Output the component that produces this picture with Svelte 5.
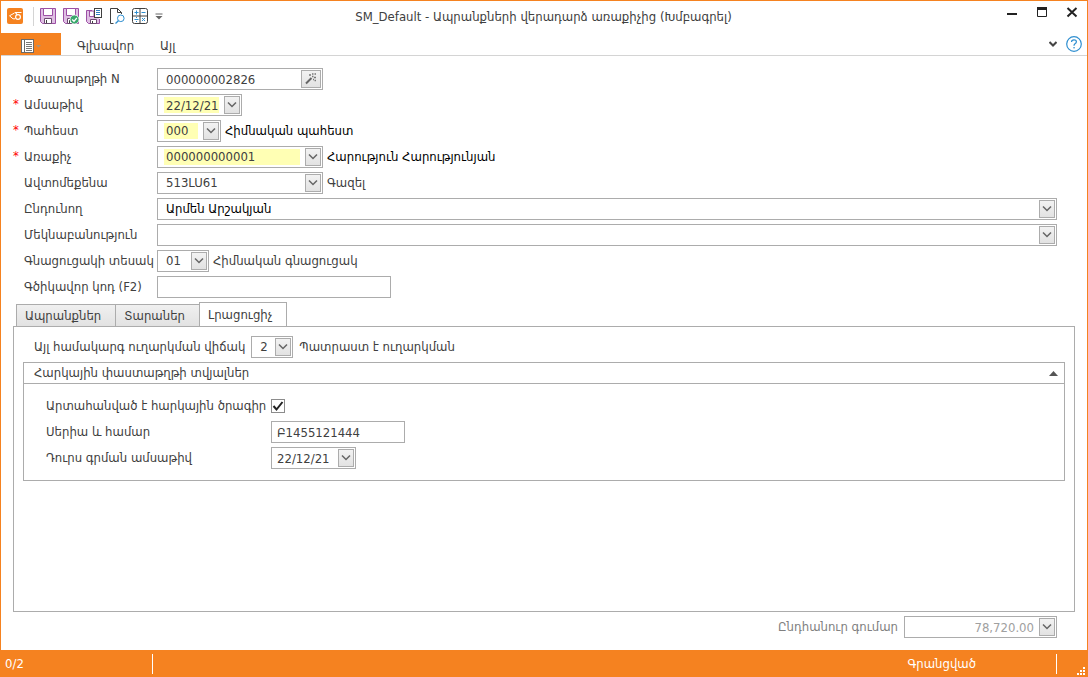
<script lang="ts">
  let docNumber = $state('000000002826');
  let docDate = $state('22/12/21');
  let barcode = $state('');
  let series = $state('Բ1455121444');
  let writeOffDate = $state('22/12/21');
  let total = $state('78,720.00');
  let exported = $state(true);
  let groupOpen = $state(true);
  let activeTab = $state(2);

  const tabs = ['Ապրանքներ', 'Տարաներ', 'Լրացուցիչ'];

  const lookups = [
    { id: 'store', label: 'Պահեստ', required: true, size: 'w-code', value: '000', note: 'Հիմնական պահեստ', strong: true },
    { id: 'supplier', label: 'Առաքիչ', required: true, size: 'w-long', value: '000000000001', note: 'Հարություն Հարությունյան', strong: true },
    { id: 'car', label: 'Ավտոմեքենա', required: false, size: 'w-long', value: '513LU61', note: 'Գազել', strong: false },
    { id: 'receiver', label: 'Ընդունող', required: false, size: 'w-full', value: 'Արմեն Արշակյան', note: '', strong: true },
    { id: 'comment', label: 'Մեկնաբանություն', required: false, size: 'w-full', value: '', note: '', strong: false },
    { id: 'price', label: 'Գնացուցակի տեսակ', required: false, size: 'w-short', value: '01', note: 'Հիմնական գնացուցակ', strong: false },
  ];
</script>

{#snippet chevron()}
  <svg width="10" height="8" viewBox="0 0 10 8" aria-hidden="true">
    <path d="M1 1.5 L5 5.5 L9 1.5" fill="none" stroke="#666" stroke-width="1.5" />
  </svg>
{/snippet}

{#snippet floppy()}
  <path d="M.5 .5 H15.5 V15.5 H2.5 L.5 13.5 Z" fill="#dfbfe3" stroke="#9c4fa5" />
  <path d="M3.5 .5 V7.5 H12.500 V.5 Z" fill="#fff" stroke="#9c4fa5" />
  <path d="M4.500 15.500 V10.500 H11.500 V15.500 Z" fill="#fff" stroke="#6b4a70" />
  <path d="M6.500 12 V15" stroke="#404040" />
{/snippet}

<div class="window">
  <header class="titlebar">
    <div class="quick">
      <svg class="logo" width="16" height="16" viewBox="0 0 16 16" aria-hidden="true">
        <rect width="16" height="16" rx="2" fill="#f58220" />
        <path d="M7.5 5 L2.500 7.800 L6 10.800 L8 10.800" fill="none" stroke="#fff" />
        <circle cx="11" cy="9" r="2.400" fill="none" stroke="#fff" stroke-width="1.2" />
        <path d="M14.500 4.500 H8.500 L10.200 6.800" fill="none" stroke="#fff" stroke-width="1.100" />
      </svg>
      <span class="divider"></span>
      <button class="tool" aria-label="Պահպանել">
        <svg width="16" height="16" viewBox="0 0 16 16">{@render floppy()}</svg>
      </button>
      <button class="tool" aria-label="Պահպանել և փակել">
        <svg width="16" height="16" viewBox="0 0 16 16">
          {@render floppy()}
          <circle cx="11.500" cy="11.500" r="4.500" fill="#3aa76d" stroke="#fff" stroke-width=".8" />
          <path d="M9.200 11.500 L11 13.300 L13.800 10" fill="none" stroke="#fff" stroke-width="1.300" />
        </svg>
      </button>
      <button class="tool" aria-label="Պահպանել և տպել">
        <svg width="16" height="16" viewBox="0 0 16 16">
          <path d="M6 2.500 H.5 V13.500 L2.500 15.500 H13.500 V11" fill="#dfbfe3" stroke="#9c4fa5" />
          <path d="M3.500 3 V8.500 H8 V3 Z" fill="#fff" stroke="#9c4fa5" />
          <path d="M4.500 15.500 V11.500 H10.500 V15.500 Z" fill="#fff" stroke="#6b4a70" />
          <path d="M6.500 13 V15" stroke="#404040" />
          <rect x="8.500" y=".5" width="7" height="9" fill="#fff" stroke="#404040" />
          <path d="M10 2.500 H14 M10 4.500 H14 M10 6.500 H14" stroke="#2f7fc0" />
        </svg>
      </button>
      <button class="tool" aria-label="Դիտել">
        <svg width="16" height="16" viewBox="0 0 16 16">
          <path d="M4.500 15.500 H1.500 V.5 H8.500 L12.500 4.500 V6" fill="none" stroke="#404040" />
          <path d="M8.500 .5 V4.500 H12.500" fill="none" stroke="#404040" />
          <circle cx="11.800" cy="10.300" r="3.300" fill="#fff" stroke="#2f8fd0" />
          <path d="M9.400 12.700 L6.500 15.500" stroke="#2f8fd0" stroke-width="1.300" />
        </svg>
      </button>
      <button class="tool" aria-label="Հաշվիչ">
        <svg width="16" height="16" viewBox="0 0 16 16">
          <rect x=".5" y=".5" width="15" height="15" rx="2" fill="#fff" stroke="#404040" />
          <path d="M8 1 V15 M1 8 H15" stroke="#404040" />
          <path d="M2.500 4.500 H6.500 M4.500 2.500 V6.500 M9.500 4.500 H13.500 M2.500 11.500 H6.500 M4.500 9 V10 M4.500 13 V14 M10 10 L13 13 M13 10 L10 13" stroke="#2f8fd0" />
        </svg>
      </button>
      <button class="tool narrow" aria-label="Կարգավորել">
        <svg width="8" height="7" viewBox="0 0 8 7">
          <path d="M.5 1 H7.500" stroke="#666" />
          <path d="M.5 3 H7.500 L4 6.500 Z" fill="#666" />
        </svg>
      </button>
    </div>
    <h1>SM_Default - Ապրանքների վերադարձ առաքիչից (Խմբագրել)</h1>
    <div class="winbuttons">
      <button class="tool" aria-label="Ծալել">
        <svg width="12" height="12" viewBox="0 0 12 12"><path d="M1 8 H11" stroke="#222" stroke-width="2" /></svg>
      </button>
      <button class="tool" aria-label="Մեծացնել">
        <svg width="12" height="12" viewBox="0 0 12 12">
          <path d="M1.500 1 V10.500 H10.500 V1" fill="none" stroke="#222" />
          <path d="M1 2.500 H11" stroke="#222" stroke-width="3" />
        </svg>
      </button>
      <button class="tool" aria-label="Փակել">
        <svg width="12" height="12" viewBox="0 0 12 12"><path d="M1.500 2 L10.500 10.500 M10.500 2 L1.500 10.500" stroke="#222" stroke-width="2" /></svg>
      </button>
    </div>
  </header>

  <nav class="ribbon">
    <button class="filemenu" aria-label="Մենյու">
      <svg width="20" height="14" viewBox="0 0 20 14">
        <rect x=".5" y=".5" width="12" height="13" fill="#fff" stroke="#6a6a6a" />
        <path d="M3.500 1 V13" stroke="#6a6a6a" />
        <path d="M5 3.500 H11 M5 5.500 H11 M5 7.500 H11 M5 9.500 H11 M5 11.500 H11" stroke="#777" />
        <path d="M15 6 H20 L17.500 8.500 Z" fill="#a8917c" />
      </svg>
    </button>
    <button class="ribbontab">Գլխավոր</button>
    <button class="ribbontab">Այլ</button>
    <button class="tool collapse" aria-label="Ծալել ժապավենը">
      <svg width="8" height="6" viewBox="0 0 8 6"><path d="M.5 1 L4 4.500 L7.500 1" fill="none" stroke="#444" stroke-width="2" /></svg>
    </button>
    <button class="tool" aria-label="Օգնություն">
      <svg width="16" height="16" viewBox="0 0 16 16">
        <circle cx="8" cy="8" r="7.300" fill="#fff" stroke="#2f8fd0" stroke-width="1.2" />
        <path d="M5.500 6 Q5.500 3.800 8 3.800 Q10.400 3.800 10.400 5.800 Q10.400 7 9 7.800 Q8 8.500 8 9.800" fill="none" stroke="#2f8fd0" stroke-width="1.2" />
        <rect x="7.400" y="11" width="1.300" height="1.400" fill="#2f8fd0" />
      </svg>
    </button>
  </nav>

  <main>
    <section class="form">
      <div class="row">
        <span class="star"></span>
        <label for="number">Փաստաթղթի N</label>
        <div class="cell">
          <div class="box w-long">
            <input id="number" bind:value={docNumber} />
            <button class="pick wide" aria-label="Գեներացնել">
              <svg width="12" height="12" viewBox="0 0 12 12">
                <path d="M1 10.500 L6.500 5" stroke="#666" stroke-width="2" />
                <path d="M4 2 H6 M7 1 H8.500 M9.500 1 H11 M7 3.500 H8.500 M9 4.500 H11 M9.500 7.500 H11 M8 6.500 H9" stroke="#777" stroke-width="1.500" />
              </svg>
            </button>
          </div>
        </div>
      </div>
      <div class="row">
        <span class="star">*</span>
        <label for="date">Ամսաթիվ</label>
        <div class="cell">
          <div class="box w-date required">
            <input id="date" bind:value={docDate} />
            <button class="pick" aria-label="Ընտրել ամսաթիվը">{@render chevron()}</button>
          </div>
        </div>
      </div>
      {#each lookups as item (item.id)}
        <div class="row">
          <span class="star">{item.required ? '*' : ''}</span>
          <label for={item.id}>{item.label}</label>
          <div class="cell">
            <div class="box {item.size}" class:required={item.required}>
              <select id={item.id} class:strong={item.strong && !item.required}>
                <option>{item.value}</option>
              </select>
              <span class="pick">{@render chevron()}</span>
            </div>
            {#if item.note}
              <span class="note" class:strong={item.strong}>{item.note}</span>
            {/if}
          </div>
        </div>
      {/each}
      <div class="row">
        <span class="star"></span>
        <label for="barcode">Գծիկավոր կոդ (F2)</label>
        <div class="cell">
          <div class="box w-barcode"><input id="barcode" bind:value={barcode} /></div>
        </div>
      </div>
    </section>

    <div class="tabs" role="tablist">
      {#each tabs as tab, i}
        <button role="tab" aria-selected={i === activeTab} class:active={i === activeTab} onclick={() => (activeTab = i)}>{tab}</button>
      {/each}
    </div>

    <section class="panel">
      {#if activeTab === 2}
        <div class="state">
          <label for="state">Այլ համակարգ ուղարկման վիճակ</label>
          <div class="box w-tiny">
            <select id="state"><option>2</option></select>
            <span class="pick">{@render chevron()}</span>
          </div>
          <span class="note">Պատրաստ է ուղարկման</span>
        </div>
        <div class="group">
          <button class="grouphead" aria-expanded={groupOpen} onclick={() => (groupOpen = !groupOpen)}>
            <span>Հարկային փաստաթղթի տվյալներ</span>
            <svg width="9" height="5" viewBox="0 0 9 5" aria-hidden="true"><path d="M0 5 L4.500 0 L9 5 Z" fill="#555" /></svg>
          </button>
          {#if groupOpen}
            <div class="groupbody">
              <div class="grow">
                <label for="exported">Արտահանված է հարկային ծրագիր</label>
                <span class="check">
                  <input id="exported" type="checkbox" bind:checked={exported} />
                  {#if exported}
                    <svg width="12" height="12" viewBox="0 0 12 12" aria-hidden="true"><path d="M1.500 6 L4.500 9.500 L10.500 2" fill="none" stroke="#222" stroke-width="2" /></svg>
                  {/if}
                </span>
              </div>
              <div class="grow">
                <label for="series">Սերիա և համար</label>
                <div class="box w-series tight"><input id="series" bind:value={series} /></div>
              </div>
              <div class="grow">
                <label for="writeoff">Դուրս գրման ամսաթիվ</label>
                <div class="box w-date tight">
                  <input id="writeoff" bind:value={writeOffDate} />
                  <button class="pick" aria-label="Ընտրել ամսաթիվը">{@render chevron()}</button>
                </div>
              </div>
            </div>
          {/if}
        </div>
      {/if}
    </section>

    <div class="total">
      <label for="total">Ընդհանուր գումար</label>
      <div class="box w-total">
        <input id="total" bind:value={total} readonly />
        <button class="pick" aria-label="Բացել">{@render chevron()}</button>
      </div>
    </div>
  </main>

  <footer class="status">
    <span class="count">0/2</span>
    <span class="message">Գրանցված</span>
    <span class="gripcell">
      <svg width="8" height="8" viewBox="0 0 8 8" aria-hidden="true">
        <path d="M6 0 H8 V2 H6 Z M3 3 H5 V5 H3 Z M6 3 H8 V5 H6 Z M0 6 H2 V8 H0 Z M3 6 H5 V8 H3 Z M6 6 H8 V8 H6 Z" fill="#fff" />
      </svg>
    </span>
  </footer>
</div>

<style>
  :global(body) {
    margin: 0;
  }
  .window {
    --accent: #f58220;
    --line: #acacac;
    --text: #404040;
    display: flex;
    flex-direction: column;
    min-height: 100vh;
    box-sizing: border-box;
    border: 1px solid var(--accent);
    border-bottom: 0;
    background: #fff;
    color: var(--text);
    font: 13px/20px 'DejaVu Sans Condensed', 'DejaVu Sans', sans-serif;
  }
  button,
  input,
  select {
    font: inherit;
    color: inherit;
    margin: 0;
  }
  svg {
    display: block;
  }
  label {
    line-height: 22px;
    white-space: nowrap;
  }
  .tool {
    display: grid;
    place-items: center;
    width: 16px;
    height: 16px;
    padding: 0;
    border: 0;
    background: none;
  }
  .tool.narrow {
    width: 8px;
  }
  .titlebar {
    display: grid;
    grid-template-columns: 1fr auto 1fr;
    align-items: center;
    height: 32px;
    padding: 0 7px 0 6px;
  }
  .quick {
    display: flex;
    align-items: center;
    gap: 7px;
    padding-bottom: 2px;
  }
  .divider {
    width: 1px;
    height: 19px;
    margin: 0 -1px 0 3px;
    background: #d4d4d4;
  }
  h1 {
    margin: 0;
    font-size: 13px;
    font-weight: 400;
  }
  .winbuttons {
    display: flex;
    justify-content: flex-end;
    gap: 14px;
    padding-bottom: 10px;
  }
  .ribbon {
    display: flex;
    align-items: center;
    height: 22px;
    padding-right: 5px;
    border-bottom: 1px solid #d4d4d4;
  }
  .filemenu {
    display: grid;
    place-items: center;
    width: 60px;
    height: 22px;
    padding: 4px 0 0;
    border: 0;
    background: var(--accent);
  }
  .ribbontab {
    padding: 3px 0 0 16px;
    margin-right: 10px;
    border: 0;
    background: none;
  }
  .collapse {
    margin: 0 5px 0 auto;
  }
  main {
    flex: 1;
    display: flex;
    flex-direction: column;
    padding: 12px;
  }
  .form {
    display: grid;
    gap: 4px;
  }
  .row {
    display: grid;
    grid-template-columns: 11px 133px 1fr;
    height: 22px;
  }
  .star {
    color: #f00;
  }
  .cell {
    display: flex;
    gap: 4px;
    padding-right: 18px;
  }
  .note {
    line-height: 22px;
  }
  .strong {
    color: #000;
  }
  .box {
    display: grid;
    flex: none;
    box-sizing: border-box;
    height: 22px;
    border: 1px solid var(--line);
    background: #fff;
  }
  .box > * {
    grid-area: 1 / 1;
  }
  .box input,
  .box select {
    box-sizing: border-box;
    width: 100%;
    height: 20px;
    padding: 2px 22px 2px 6px;
    border: 0;
    outline: 0;
    appearance: none;
    background: transparent content-box;
    line-height: 16px;
    text-indent: 2px;
  }
  .box.tight input {
    padding-left: 5px;
    padding-right: 18px;
    text-indent: 0;
  }
  .required input,
  .required select {
    background-color: #ffffb4;
  }
  .pick {
    display: grid;
    place-items: center;
    place-self: center end;
    box-sizing: border-box;
    width: 16px;
    height: 18px;
    margin-right: 1px;
    padding: 0;
    border: 1px solid var(--line);
    background: linear-gradient(#f2f2f2, #e2e2e2);
    pointer-events: none;
  }
  button.pick {
    pointer-events: auto;
  }
  .pick.wide {
    width: 20px;
  }
  .w-long {
    width: 166px;
  }
  .w-date {
    width: 85px;
  }
  .w-code {
    width: 64px;
  }
  .w-short {
    width: 52px;
  }
  .w-tiny {
    width: 42px;
  }
  .w-barcode {
    width: 234px;
  }
  .w-series {
    width: 134px;
  }
  .w-total {
    width: 153px;
  }
  .w-full {
    flex: 1;
  }
  .tabs {
    display: flex;
    align-items: flex-end;
    margin: 4px 0 -1px 3px;
  }
  .tabs button {
    height: 23px;
    padding: 0 14px 0 8px;
    margin-right: -1px;
    border: 1px solid var(--line);
    background: linear-gradient(#f0f0f0, #e2e2e2);
  }
  .tabs button.active {
    height: 25px;
    border-bottom-color: #fff;
    background: #fff;
  }
  .panel {
    flex: 1;
    padding: 9px;
    border: 1px solid var(--line);
  }
  .state {
    display: flex;
    gap: 6px;
    padding-left: 11px;
    margin-bottom: 4px;
  }
  .group {
    border: 1px solid var(--line);
  }
  .grouphead {
    display: flex;
    align-items: center;
    justify-content: space-between;
    width: 100%;
    padding: 0 6px 0 10px;
    border: 0;
    background: none;
  }
  .groupbody {
    display: grid;
    gap: 4px;
    padding: 11px 22px;
    border-top: 1px solid var(--line);
  }
  .grow {
    display: grid;
    grid-template-columns: 225px auto;
    justify-content: start;
    height: 22px;
  }
  .check {
    display: grid;
    place-items: center;
    align-self: center;
    width: 14px;
    height: 14px;
  }
  .check > * {
    grid-area: 1 / 1;
    pointer-events: none;
  }
  .check input {
    appearance: none;
    box-sizing: border-box;
    width: 14px;
    height: 14px;
    border: 1px solid #8c8c8c;
    pointer-events: auto;
  }
  .total {
    display: flex;
    justify-content: flex-end;
    gap: 6px;
    padding: 4px 18px 0 0;
    color: #808080;
  }
  .total input {
    text-align: right;
    color: #a0a0a0;
  }
  .status {
    display: flex;
    align-items: center;
    height: 27px;
    background: var(--accent);
    color: #fff;
  }
  .count {
    width: 147px;
    padding-left: 4px;
    border-right: 1px solid #fff;
  }
  .message {
    flex: 1;
    padding-right: 80px;
    border-right: 1px solid #fff;
    text-align: right;
  }
  .gripcell {
    display: grid;
    place-items: end;
    align-self: stretch;
    width: 28px;
    padding: 0 2px 2px 0;
  }
</style>
